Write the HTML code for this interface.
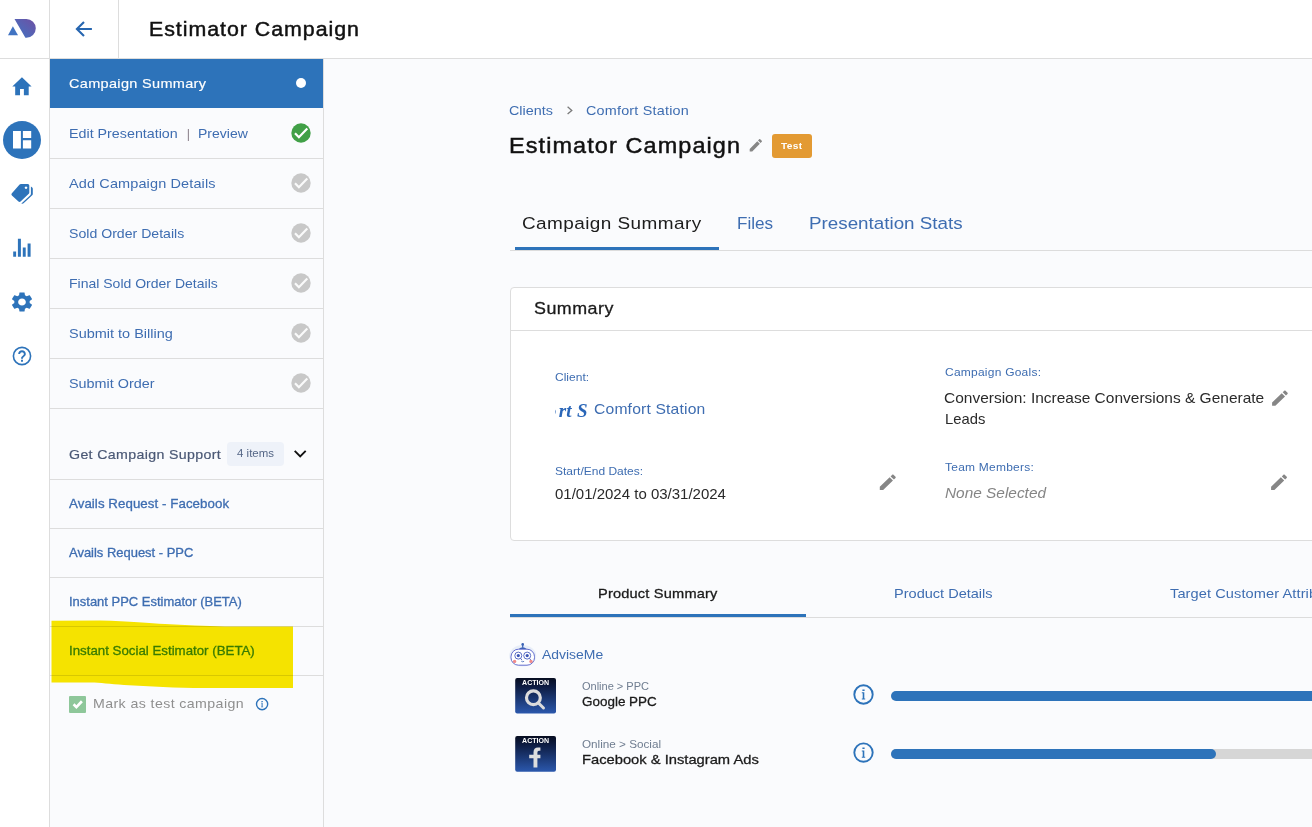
<!DOCTYPE html>
<html lang="en">
<head>
<meta charset="utf-8">
<title>Estimator Campaign</title>
<style>
*{box-sizing:border-box;margin:0;padding:0}
html,body{width:1312px;height:827px;overflow:hidden;background:#fafbfd;font-family:"Liberation Sans",sans-serif;color:#222}
.a{position:absolute}
.t{position:absolute;white-space:nowrap;line-height:1;transform-origin:0 0}
#top{left:0;top:0;width:1312px;height:59px;background:#fff;border-bottom:1px solid #dddddd}
#rail{left:0;top:0;width:50px;height:827px;background:#fff;border-right:1px solid #dddddd}
#vline{left:118px;top:0;width:1px;height:58px;background:#dddddd}
#side{left:50px;top:59px;width:274px;height:768px;background:#fafbfd;border-right:1px solid #dddddd}
.hl{left:50px;width:273px;height:1px;background:#dddddd}
.ck{width:20px;height:20px;left:291px}
svg{position:absolute;overflow:visible}
#card{left:510px;top:287px;width:900px;height:254px;background:#fff;border:1px solid #dddddd;border-radius:4px}
</style>
</head>
<body>
<div class="a" id="top"></div>
<div class="a" id="rail"></div>
<div class="a" id="vline"></div>
<div class="a" style="left:0;top:58px;width:50px;height:1px;background:#dddddd"></div>
<div class="a" id="side"></div>

<!-- sidebar rows -->
<div class="a" style="left:50px;top:59px;width:273px;height:49px;background:#2d73ba"></div>
<div class="a" style="left:296px;top:78px;width:10px;height:10px;border-radius:50%;background:#fff"></div>
<div class="a hl" style="top:158px"></div>
<div class="a hl" style="top:208px"></div>
<div class="a hl" style="top:258px"></div>
<div class="a hl" style="top:308px"></div>
<div class="a hl" style="top:358px"></div>
<div class="a hl" style="top:408px"></div>
<div class="a hl" style="top:479px"></div>
<div class="a hl" style="top:528px"></div>
<div class="a hl" style="top:577px"></div>
<div class="a hl" style="top:626px"></div>
<div class="a hl" style="top:675px"></div>
<div class="a" style="left:227px;top:442px;width:57px;height:24px;border-radius:4px;background:#eef2f9"></div>
<!-- main -->
<div class="a" style="left:772px;top:134px;width:40px;height:24px;border-radius:3px;background:#e39a33"></div>
<div class="a" style="left:510px;top:250px;width:802px;height:1px;background:#dcdcdc"></div>
<div class="a" style="left:515px;top:247px;width:204px;height:3px;background:#2d73ba"></div>
<div class="a" id="card"></div>
<div class="a" style="left:511px;top:330px;width:801px;height:1px;background:#dddddd"></div>
<div class="a" style="left:555px;top:398px;width:33px;height:24px;overflow:hidden"><span class="t" style="left:-6.200px;top:3px;font-family:'Liberation Serif',serif;font-weight:bold;font-style:italic;font-size:19px;color:#2a66b8;letter-spacing:0.300px"><span style="margin-left:-2.200px;margin-right:2.200px">o</span>rt S</span></div>
<div class="a" style="left:510px;top:617px;width:802px;height:1px;background:#dcdcdc"></div>
<div class="a" style="left:510px;top:614px;width:296px;height:3px;background:#2d73ba"></div>
<div class="a" style="left:891px;top:691px;width:500px;height:10px;border-radius:5px;background:#2d73ba"></div>
<div class="a" style="left:891px;top:749px;width:500px;height:10px;border-radius:5px;background:#d6d6d6"></div>
<div class="a" style="left:891px;top:749px;width:325px;height:10px;border-radius:5px;background:#2d73ba"></div>
<!-- icons layer -->
<svg style="left:0;top:0" width="1312" height="827" viewBox="0 0 1312 827">
<defs>
<linearGradient id="lg" x1="0" y1="1" x2="1" y2="0"><stop offset="0" stop-color="#3f76c4"/><stop offset="1" stop-color="#6f4fa3"/></linearGradient>
<linearGradient id="pg" x1="0" y1="0" x2="0" y2="1"><stop offset="0" stop-color="#070d20"/><stop offset="0.230" stop-color="#0d1b40"/><stop offset="1" stop-color="#2b58ad"/></linearGradient>
</defs>
<!-- logo -->
<path d="M8 35.300 L12.900 26.200 L18 35.300 Z" fill="#4173c2"/>
<path d="M14.500 18.900 H26.400 A9.400 9.400 0 0 1 26.400 37.700 H25.400 Z" fill="url(#lg)"/>
<!-- back arrow -->
<path d="M91.900 29 H77.300 M84 21.900 L76.900 29 L84 36.100" fill="none" stroke="#2766b0" stroke-width="2.100"/>
<!-- home -->
<path transform="translate(21.950,86.200) scale(0.965,1.030) translate(-12,-11.800)" d="M10 20.600v-6.100h4v6.100h5v-8.600h3L12 3 2 12h3v8.600z" fill="#2d73ba"/>
<!-- dashboard -->
<circle cx="22" cy="140" r="19" fill="#2d73ba"/>
<path d="M13 131h7.900v17.600H13z M22.900 131h8.300v7h-8.300z M22.900 140.200h8.300v8.400h-8.300z" fill="#fff"/>
<!-- tag -->
<path d="M20.900 184.100 H27.800 Q29.300 184.100 29.300 185.600 V192.600 Q29.300 193.300 28.800 193.800 L20.600 201.400 Q19.400 202.400 18.200 201.300 L11.900 195.500 Q10.800 194.300 11.900 193.200 L19.600 184.600 Q20.100 184.100 20.900 184.100 Z M26 186.400 a1.300 1.300 0 1 0 0.010 0 Z" fill="#2d73ba" fill-rule="evenodd"/>
<path d="M30.900 186.600 L32.200 187.600 Q32.800 188.100 32.800 188.900 V194 Q32.800 194.800 32.200 195.300 L23.600 203.300 Q22.600 204.100 21.400 203.600 L30.300 195.200 Q30.900 194.600 30.900 193.800 Z" fill="#2d73ba"/>
<!-- bar chart -->
<path d="M13.200 251.500h2.900v5.300h-2.900z M17.900 238.800h3v18h-3z M22.800 247.500h2.900v9.300h-2.900z M27.600 243.500h3v13.300h-3z" fill="#2d73ba"/>
<!-- gear -->
<path transform="translate(22,302) scale(1.070,1) translate(-12,-12)" fill="#2d73ba" d="M19.140 12.940c.04-.3.06-.61.06-.94 0-.32-.02-.64-.07-.94l2.030-1.580c.18-.14.23-.41.12-.61l-1.920-3.320c-.12-.22-.37-.29-.59-.22l-2.390.96c-.5-.38-1.030-.7-1.620-.94l-.36-2.540c-.04-.24-.24-.41-.48-.41h-3.840c-.24 0-.43.17-.47.41l-.36 2.540c-.59.24-1.130.57-1.620.94l-2.390-.96c-.22-.08-.47 0-.59.22L2.740 8.870c-.12.21-.08.47.12.61l2.030 1.580c-.05.3-.09.63-.09.94s.02.64.07.94l-2.030 1.580c-.18.14-.23.41-.12.61l1.920 3.320c.12.22.37.29.59.22l2.390-.96c.5.38 1.030.7 1.620.94l.36 2.540c.05.24.24.41.48.41h3.840c.24 0 .44-.17.47-.41l.36-2.540c.59-.24 1.130-.56 1.620-.94l2.390.96c.22.08.47 0 .59-.22l1.920-3.320c.12-.22.07-.47-.12-.61l-2.010-1.580zM12 15.600c-1.980 0-3.600-1.620-3.600-3.600s1.620-3.600 3.600-3.600 3.600 1.620 3.600 3.600-1.620 3.600-3.600 3.600z"/>
<!-- help -->
<circle cx="22" cy="356" r="8.600" fill="none" stroke="#2d73ba" stroke-width="1.600"/>
<path transform="translate(22,356) scale(0.950) translate(-12,-12)" fill="#2d73ba" d="M11 18h2v-2h-2v2zm1-12c-2.210 0-4 1.790-4 4h2c0-1.100.9-2 2-2s2 .9 2 2c0 2-3 1.750-3 5h2c0-2.250 3-2.500 3-5 0-2.210-1.790-4-4-4z"/>
<!-- checks -->
<g transform="translate(301,133)"><circle r="9.700" fill="#41a047"/><path d="M-6 0.300 L-2.100 4.200 L6.300 -4.500" fill="none" stroke="#fff" stroke-width="2.200"/></g>
<g transform="translate(301,183)"><circle r="9.700" fill="#c8c8c8"/><path d="M-6 0.300 L-2.100 4.200 L6.300 -4.500" fill="none" stroke="#fafafa" stroke-width="2.200"/></g>
<g transform="translate(301,233)"><circle r="9.700" fill="#c8c8c8"/><path d="M-6 0.300 L-2.100 4.200 L6.300 -4.500" fill="none" stroke="#fafafa" stroke-width="2.200"/></g>
<g transform="translate(301,283)"><circle r="9.700" fill="#c8c8c8"/><path d="M-6 0.300 L-2.100 4.200 L6.300 -4.500" fill="none" stroke="#fafafa" stroke-width="2.200"/></g>
<g transform="translate(301,333)"><circle r="9.700" fill="#c8c8c8"/><path d="M-6 0.300 L-2.100 4.200 L6.300 -4.500" fill="none" stroke="#fafafa" stroke-width="2.200"/></g>
<g transform="translate(301,383)"><circle r="9.700" fill="#c8c8c8"/><path d="M-6 0.300 L-2.100 4.200 L6.300 -4.500" fill="none" stroke="#fafafa" stroke-width="2.200"/></g>
<!-- chevron -->
<path d="M294.700 450.900 L300.200 456.400 L305.700 450.900" fill="none" stroke="#111" stroke-width="1.900"/>
<!-- checkbox -->
<rect x="69" y="696" width="17" height="17" rx="1" fill="#8ec79a"/>
<path d="M73.600 704.300 L76.400 707.100 L81.900 701.300" fill="none" stroke="#fff" stroke-width="2.700"/>
<g transform="translate(262.10,704.10) scale(0.6207)"><circle r="9.02" fill="none" stroke="#2d73ba" stroke-width="2.26"/><path fill="#2d73ba" d="M-1.100 -5.100h2.200v1.600h-2.200z M-1.700 -2.200h2.500v6.300h.9v1h-3.400v-1h.9v-5.300h-.9z"/></g>
<!-- breadcrumb chevron -->
<path d="M567.600 106.700 L571.800 110.400 L567.600 114.100" fill="none" stroke="#7a7a7a" stroke-width="1.300"/>
<!-- pencils -->
<path fill="#868686" transform="translate(749.70,139.00) scale(0.6833,0.7000) translate(-3,-3)" d="M3 17.250V21h3.750L17.810 9.940l-3.750-3.750L3 17.250zM20.710 7.040c.39-.39.39-1.020 0-1.410l-2.340-2.340c-.39-.39-1.020-.39-1.410 0l-1.830 1.830 3.750 3.750 1.830-1.830z"/>
<path fill="#868686" transform="translate(879.80,474.60) scale(0.8889,0.8556) translate(-3,-3)" d="M3 17.250V21h3.750L17.810 9.940l-3.750-3.750L3 17.250zM20.710 7.040c.39-.39.39-1.020 0-1.410l-2.340-2.340c-.39-.39-1.020-.39-1.410 0l-1.830 1.830 3.750 3.750 1.830-1.830z"/>
<path fill="#868686" transform="translate(1272.10,390.50) scale(0.8722,0.8500) translate(-3,-3)" d="M3 17.250V21h3.750L17.810 9.940l-3.750-3.750L3 17.250zM20.710 7.040c.39-.39.39-1.020 0-1.410l-2.340-2.340c-.39-.39-1.020-.39-1.410 0l-1.830 1.830 3.750 3.750 1.830-1.830z"/>
<path fill="#868686" transform="translate(1271.10,474.60) scale(0.8833,0.8500) translate(-3,-3)" d="M3 17.250V21h3.750L17.810 9.940l-3.750-3.750L3 17.250zM20.710 7.040c.39-.39.39-1.020 0-1.410l-2.340-2.340c-.39-.39-1.020-.39-1.410 0l-1.830 1.830 3.750 3.750 1.830-1.830z"/>
<!-- robot -->
<g transform="translate(509,642.800)">
<ellipse cx="13.700" cy="13" rx="13.500" ry="10.700" fill="#e8eef8"/>
<path d="M13.700 1 V5" stroke="#3b63b5" stroke-width="1.200"/><circle cx="13.700" cy="1.600" r="1.300" fill="#3b63b5"/>
<path d="M9.500 6.400 Q13.700 2.500 18 6.400 Z" fill="#3b63b5"/>
<rect x="2" y="6.400" width="23.500" height="16" rx="7.500" fill="#fff" stroke="#5560c8" stroke-width="0.900"/>
<circle cx="9.300" cy="12.800" r="3.500" fill="#fff" stroke="#4a5fc0" stroke-width="0.900"/><circle cx="9.300" cy="12.800" r="1.600" fill="#3b55b5"/><path d="M11.600 15.600 L13 17.400" stroke="#4a5fc0" stroke-width="0.900"/>
<circle cx="18.200" cy="12.800" r="3.500" fill="#fff" stroke="#4a5fc0" stroke-width="0.900"/><circle cx="18.200" cy="12.800" r="1.600" fill="#3b55b5"/><path d="M20.500 15.600 L21.900 17.400" stroke="#4a5fc0" stroke-width="0.900"/>
<circle cx="5.600" cy="18.600" r="1.700" fill="#f08a8a"/><circle cx="22" cy="18.600" r="1.700" fill="#f08a8a"/>
<path d="M12.300 18.500 Q13.700 19.500 15.100 18.500" fill="none" stroke="#3b63b5" stroke-width="0.800"/>
</g>
<!-- product icons -->
<g transform="translate(515.200,677.900)">
<rect width="40.800" height="35.700" rx="2" fill="url(#pg)"/>
<text x="20.400" y="7" text-anchor="middle" font-family="Liberation Sans,sans-serif" font-weight="bold" font-size="8" fill="#fff" textLength="27" lengthAdjust="spacingAndGlyphs">ACTION</text>
<circle cx="18.200" cy="19.900" r="6.900" fill="none" stroke="#dcdcdc" stroke-width="3.200"/><path d="M23.500 25.300 L28.300 30.100" stroke="#dcdcdc" stroke-width="3" stroke-linecap="round"/>
</g>
<g transform="translate(515.200,736)">
<rect width="40.800" height="35.700" rx="2" fill="url(#pg)"/>
<text x="20.400" y="7" text-anchor="middle" font-family="Liberation Sans,sans-serif" font-weight="bold" font-size="8" fill="#fff" textLength="27" lengthAdjust="spacingAndGlyphs">ACTION</text>
<path d="M18.300 31.500 V22.300 H14 V18.800 H18.300 V16.300 Q18.300 11.400 22.800 11.400 H25.200 V14.800 H23.700 Q22.200 14.800 22.200 16.400 V18.800 H25.200 V22.300 H22.200 V31.500 Z" fill="#dedede"/>
</g>
<g transform="translate(863.50,694.50) scale(1.0000)"><circle r="9.20" fill="none" stroke="#2d73ba" stroke-width="1.90"/><path fill="#2d73ba" d="M-1.100 -5.100h2.200v1.600h-2.200z M-1.700 -2.200h2.500v6.300h.9v1h-3.400v-1h.9v-5.300h-.9z"/></g>
<g transform="translate(863.50,752.60) scale(1.0000)"><circle r="9.20" fill="none" stroke="#2d73ba" stroke-width="1.90"/><path fill="#2d73ba" d="M-1.100 -5.100h2.200v1.600h-2.200z M-1.700 -2.200h2.500v6.300h.9v1h-3.400v-1h.9v-5.300h-.9z"/></g>
</svg>

<span class="t" style="left:148.6px;top:20.00px;font-size:19.6px;color:#111;letter-spacing:0.89px;transform:scaleX(1.09);-webkit-text-stroke:0.45px currentColor;">Estimator Campaign</span>
<span class="t" style="left:69.2px;top:77.00px;font-size:13.3px;color:#fff;letter-spacing:0.3px;transform:scaleX(1.09);-webkit-text-stroke:0.15px currentColor;">Campaign Summary</span>
<span class="t" style="left:68.9px;top:127.00px;font-size:13.3px;color:#3e6db1;transform:scaleX(1.074);">Edit Presentation</span>
<span class="t" style="left:186.8px;top:128.00px;font-size:12.5px;color:#8a7f8a;">|</span>
<span class="t" style="left:198.1px;top:127.00px;font-size:13.3px;color:#3e6db1;transform:scaleX(1.053);">Preview</span>
<span class="t" style="left:69.2px;top:177.00px;font-size:13.3px;color:#3e6db1;letter-spacing:0.11px;transform:scaleX(1.09);">Add Campaign Details</span>
<span class="t" style="left:69.2px;top:227.00px;font-size:13.3px;color:#3e6db1;transform:scaleX(1.061);">Sold Order Details</span>
<span class="t" style="left:69.2px;top:277.00px;font-size:13.3px;color:#3e6db1;transform:scaleX(1.054);">Final Sold Order Details</span>
<span class="t" style="left:69.2px;top:327.00px;font-size:13.3px;color:#3e6db1;transform:scaleX(1.088);">Submit to Billing</span>
<span class="t" style="left:69.2px;top:377.00px;font-size:13.3px;color:#3e6db1;transform:scaleX(1.082);">Submit Order</span>
<span class="t" style="left:69.2px;top:448.00px;font-size:13px;color:#4a5875;letter-spacing:0.33px;transform:scaleX(1.09);-webkit-text-stroke:0.2px currentColor;">Get Campaign Support</span>
<span class="t" style="left:237.3px;top:448.00px;font-size:10.5px;color:#536585;letter-spacing:0.02px;transform:scaleX(1.09);">4 items</span>
<span class="t" style="left:69.2px;top:498.00px;font-size:12.2px;color:#3e6db1;letter-spacing:0.06px;transform:scaleX(1.09);-webkit-text-stroke:0.3px currentColor;">Avails Request - Facebook</span>
<span class="t" style="left:69.2px;top:547.00px;font-size:12.2px;color:#3e6db1;transform:scaleX(1.063);-webkit-text-stroke:0.3px currentColor;">Avails Request - PPC</span>
<span class="t" style="left:69.2px;top:596.00px;font-size:12.2px;color:#3e6db1;transform:scaleX(1.064);-webkit-text-stroke:0.3px currentColor;">Instant PPC Estimator (BETA)</span>
<span class="t" style="left:69.2px;top:645.00px;font-size:12.2px;color:#3a88b8;transform:scaleX(1.09);-webkit-text-stroke:0.3px currentColor;">Instant Social Estimator (BETA)</span>
<span class="t" style="left:93.2px;top:697.00px;font-size:13px;color:#8f8f8f;letter-spacing:0.37px;transform:scaleX(1.09);">Mark as test campaign</span>
<span class="t" style="left:508.9px;top:104.00px;font-size:13.2px;color:#3e6db1;transform:scaleX(1.089);">Clients</span>
<span class="t" style="left:585.5px;top:104.00px;font-size:13.2px;color:#3e6db1;letter-spacing:0.19px;transform:scaleX(1.09);">Comfort Station</span>
<span class="t" style="left:508.9px;top:136.00px;font-size:21.5px;color:#111;letter-spacing:1.01px;transform:scaleX(1.09);-webkit-text-stroke:0.45px currentColor;">Estimator Campaign</span>
<span class="t" style="left:781.3px;top:142.00px;font-size:9.3px;color:#fff;letter-spacing:0.34px;transform:scaleX(1.09);font-weight:bold;">Test</span>
<span class="t" style="left:521.7px;top:215.00px;font-size:17.4px;color:#1c1c1c;letter-spacing:0.39px;transform:scaleX(1.09);">Campaign Summary</span>
<span class="t" style="left:736.7px;top:215.00px;font-size:17.4px;color:#3e6db1;transform:scaleX(0.983);">Files</span>
<span class="t" style="left:808.5px;top:215.00px;font-size:17.4px;color:#3e6db1;transform:scaleX(1.081);">Presentation Stats</span>
<span class="t" style="left:534.3px;top:300.00px;font-size:16.4px;color:#1a1a1a;letter-spacing:0.44px;transform:scaleX(1.09);-webkit-text-stroke:0.3px currentColor;">Summary</span>
<span class="t" style="left:554.8px;top:372.00px;font-size:11px;color:#3e6db1;letter-spacing:0.02px;transform:scaleX(1.09);">Client:</span>
<span class="t" style="left:594.0px;top:402.00px;font-size:14.4px;color:#3e6db1;letter-spacing:0.15px;transform:scaleX(1.09);">Comfort Station</span>
<span class="t" style="left:554.9px;top:466.00px;font-size:11px;color:#3e6db1;letter-spacing:0.01px;transform:scaleX(1.09);">Start/End Dates:</span>
<span class="t" style="left:554.9px;top:487.00px;font-size:14.2px;color:#2a2a2a;transform:scaleX(1.057);">01/01/2024 to 03/31/2024</span>
<span class="t" style="left:944.7px;top:367.00px;font-size:11px;color:#3e6db1;letter-spacing:0.22px;transform:scaleX(1.09);">Campaign Goals:</span>
<span class="t" style="left:943.9px;top:391.00px;font-size:14.4px;color:#2a2a2a;transform:scaleX(1.076);">Conversion: Increase Conversions &amp; Generate</span>
<span class="t" style="left:944.7px;top:412.00px;font-size:14.4px;color:#2a2a2a;transform:scaleX(1.028);">Leads</span>
<span class="t" style="left:944.7px;top:462.00px;font-size:11px;color:#3e6db1;letter-spacing:0.22px;transform:scaleX(1.09);">Team Members:</span>
<span class="t" style="left:945.2px;top:486.00px;font-size:14.4px;color:#858585;transform:scaleX(1.07);font-style:italic;">None Selected</span>
<span class="t" style="left:597.5px;top:587.00px;font-size:13.4px;color:#1a1a1a;letter-spacing:0.17px;transform:scaleX(1.09);-webkit-text-stroke:0.3px currentColor;">Product Summary</span>
<span class="t" style="left:893.5px;top:587.00px;font-size:13.4px;color:#3e6db1;transform:scaleX(1.086);">Product Details</span>
<span class="t" style="left:1169.9px;top:587.00px;font-size:13.4px;color:#3e6db1;letter-spacing:0.08px;transform:scaleX(1.09);">Target Customer Attributes</span>
<span class="t" style="left:542.0px;top:648.00px;font-size:13.2px;color:#3e6db1;transform:scaleX(1.057);">AdviseMe</span>
<span class="t" style="left:581.8px;top:681.00px;font-size:11.5px;color:#6f7d90;letter-spacing:-0.02px;transform:scaleX(0.96);">Online &gt; PPC</span>
<span class="t" style="left:581.8px;top:695.00px;font-size:13.6px;color:#1a1a1a;transform:scaleX(0.989);-webkit-text-stroke:0.3px currentColor;">Google PPC</span>
<span class="t" style="left:581.8px;top:739.00px;font-size:11.5px;color:#6f7d90;transform:scaleX(1.018);">Online &gt; Social</span>
<span class="t" style="left:581.8px;top:753.00px;font-size:13.6px;color:#1a1a1a;transform:scaleX(1.083);-webkit-text-stroke:0.3px currentColor;">Facebook &amp; Instagram Ads</span>

<!-- highlighter -->
<svg style="left:0;top:0;mix-blend-mode:multiply" width="1312" height="827" viewBox="0 0 1312 827"><path d="M51.500 620.800 L100 620.400 C130 621 150 623 165 624.100 C185 625.300 205 626.200 225 626.500 L293 626.500 L293 688 L205 688 C175 687.800 150 686.600 124 685 C110 684 100 682.800 91 682.600 L51.500 682.400 Z" fill="#fae700"/></svg>
</body>
</html>
